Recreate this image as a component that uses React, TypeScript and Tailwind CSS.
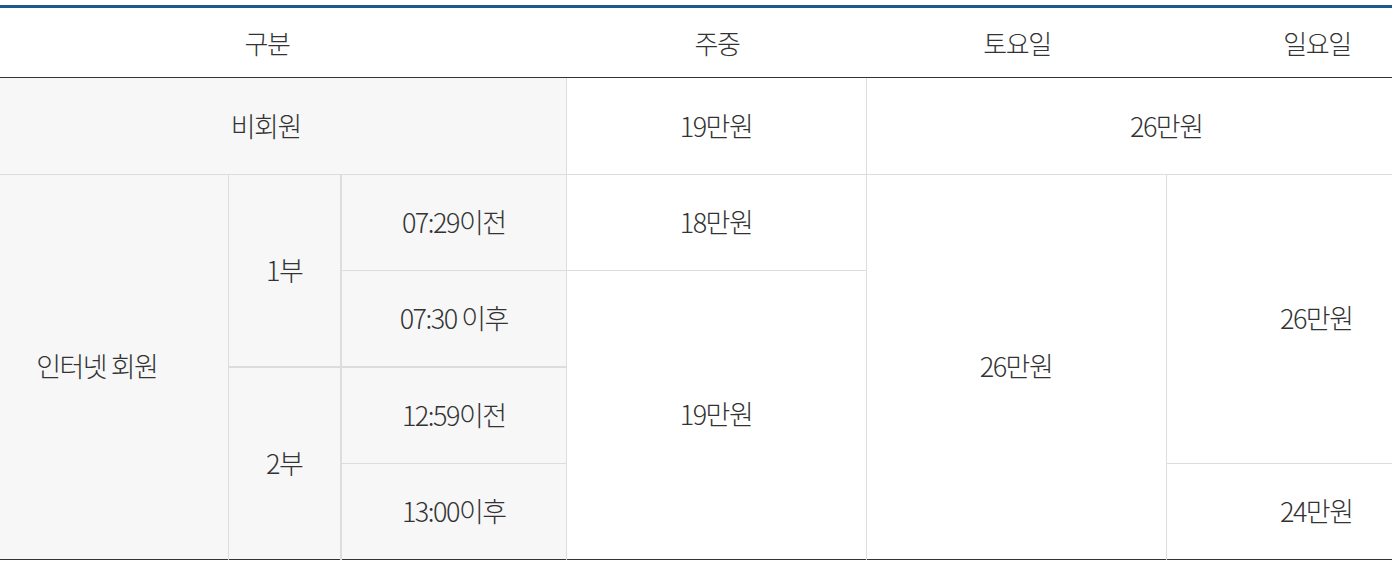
import React from 'react';

const cellBase = 'border border-[#dddddd] text-center align-middle p-0';
const gray = 'bg-[#f7f7f7]';

export default function App() {
  return (
    <div
      className="w-[1392px] h-[565px] overflow-hidden bg-white pt-[5px] text-[#333333] font-light"
      style={{ fontFamily: '"Noto Sans CJK KR", "Noto Sans", sans-serif' }}
    >
      <div className="w-[1466px] border-t-[3px] border-[#1c5a8c]">
        {/* header */}
        <div className="grid grid-cols-[534px_366px_234px_366px] h-[70px] items-center text-[26px] tracking-[-1.5px] border-b border-[#333333]">
          <div className="text-center">구분</div>
          <div className="text-center">주중</div>
          <div className="text-center">토요일</div>
          <div className="text-center">일요일</div>
        </div>

        <table className="w-[1466px] border-collapse table-fixed text-[27px] tracking-[-1.5px] border-b border-[#333333] border-x-0">
          <colgroup>
            <col className="w-[228px]" />
            <col className="w-[113px]" />
            <col className="w-[225px]" />
            <col className="w-[300px]" />
            <col className="w-[300px]" />
            <col className="w-[300px]" />
          </colgroup>
          <tbody>
            <tr className="h-[96px]">
              <td colSpan={3} className={`${cellBase} ${gray} border-t-0 border-l-0 pr-[34px]`}>
                비회원
              </td>
              <td className={`${cellBase} border-t-0`}>19만원</td>
              <td colSpan={2} className={`${cellBase} border-t-0 border-r-0`}>
                26만원
              </td>
            </tr>
            <tr className="h-[96px]">
              <td rowSpan={4} className={`${cellBase} ${gray} border-l-0 border-b-0 pr-[34px]`}>
                인터넷 회원
              </td>
              <td rowSpan={2} className={`${cellBase} ${gray}`}>1부</td>
              <td className={`${cellBase} ${gray} border-l-2`}>07:29이전</td>
              <td className={`${cellBase}`}>18만원</td>
              <td rowSpan={4} className={`${cellBase} border-b-0`}>26만원</td>
              <td rowSpan={3} className={`${cellBase} border-r-0`}>26만원</td>
            </tr>
            <tr className="h-[97px]">
              <td className={`${cellBase} ${gray} border-l-2`}>07:30 이후</td>
              <td rowSpan={3} className={`${cellBase} border-b-0`}>19만원</td>
            </tr>
            <tr className="h-[96px]">
              <td rowSpan={2} className={`${cellBase} ${gray} border-t-2 border-b-0`}>2부</td>
              <td className={`${cellBase} ${gray} border-l-2 border-t-2`}>12:59이전</td>
            </tr>
            <tr className="h-[96px]">
              <td className={`${cellBase} ${gray} border-l-2 border-b-0`}>13:00이후</td>
              <td className={`${cellBase} border-r-0 border-b-0`}>24만원</td>
            </tr>
          </tbody>
        </table>
      </div>
    </div>
  );
}
